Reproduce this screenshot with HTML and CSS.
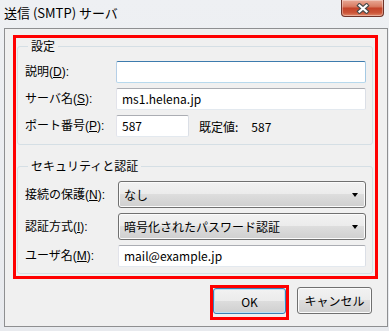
FILE: index.html
```html
<!DOCTYPE html>
<html lang="ja">
<head>
  <meta charset="UTF-8" />
  <title>送信 (SMTP) サーバ</title>
  <link rel="stylesheet" href="styles.css">
</head>
<body>
  <div class="window">
    <div class="titlebar">
      <span class="title">送信 (SMTP) サーバ</span>
      <span class="close">
        <svg width="14" height="11" viewBox="0 0 14 11">
          <path d="M3.5 2.5 L10.5 8.5 M10.5 2.5 L3.5 8.5" stroke="#4b4b4b" stroke-width="4.4" stroke-linecap="square" fill="none"/>
          <path d="M3.5 2.5 L10.5 8.5 M10.5 2.5 L3.5 8.5" stroke="#fff" stroke-width="2.2" stroke-linecap="square" fill="none"/>
        </svg>
      </span>
    </div>

    <div class="client">
      <div class="mark">
        <fieldset class="group g1">
          <legend>設定</legend>
          <div class="rows">
            <div class="row">
              <span class="label">説明(<u>D</u>):</span>
              <div class="field focus"></div>
            </div>
            <div class="row">
              <span class="label">サーバ名(<u>S</u>):</span>
              <div class="field">ms1.helena.jp</div>
            </div>
            <div class="row">
              <span class="label">ポート番号(<u>P</u>):</span>
              <div class="inline">
                <div class="field port">587</div>
                <span class="default-label">既定値:</span>
                <span class="default-value">587</span>
              </div>
            </div>
          </div>
        </fieldset>

        <fieldset class="group g2">
          <legend>セキュリティと認証</legend>
          <div class="rows">
            <div class="row tall">
              <span class="label">接続の保護(<u>N</u>):</span>
              <div class="combo"><span>なし</span><span class="arrow"></span></div>
            </div>
            <div class="row tall">
              <span class="label">認証方式(<u>I</u>):</span>
              <div class="combo"><span>暗号化されたパスワード認証</span><span class="arrow"></span></div>
            </div>
            <div class="row">
              <span class="label">ユーザ名(<u>M</u>):</span>
              <div class="field">mail@example.jp</div>
            </div>
          </div>
        </fieldset>
      </div>

      <div class="buttons">
        <span class="ok-mark"><button class="btn default">OK</button></span>
        <button class="btn cancel">キャンセル</button>
      </div>
    </div>
  </div>
</body>
</html>
```

FILE: styles.css
```css
body {
  margin: 0;
  font-family: "Noto Sans CJK JP", sans-serif;
  font-size: 12px;
  color: #000;
}
.window {
  width: 389px;
  height: 331px;
  box-sizing: border-box;
  padding: 0 1px 4px 4px;
  background: linear-gradient(to bottom, #eef0f3, #e8eaee);
  display: flex;
  flex-direction: column;
}
.titlebar {
  height: 28px;
  flex: none;
  display: flex;
  align-items: flex-start;
}
.title {
  font-size: 13px;
  line-height: 18px;
  margin-top: 4px;
}
.close {
  margin-left: auto;
  margin-right: 4px;
  width: 43px;
  height: 17px;
  box-sizing: border-box;
  border: 1px solid #70342a;
  border-top: none;
  border-radius: 0 0 4px 4px;
  background: linear-gradient(to bottom, #e9a996 0%, #d97c63 40%, #c4442a 52%, #cc5538 80%, #e08a6c 100%);
  box-shadow: inset 0 0 0 1px rgba(255,255,255,0.35);
  display: flex;
  align-items: center;
  justify-content: center;
}
.client {
  flex: 1;
  border: 1px solid #8e8f91;
  background: #f0f0f0;
  padding: 6px 9px 0 8px;
}
.mark {
  border: 3px solid #ff0000;
  padding: 0 2px 2px 1px;
}
.group {
  margin: 0;
  border: 1px solid #d5dfe5;
  border-radius: 3px;
  padding: 7px 6px 7px 7px;
  min-width: 0;
}
.group legend {
  margin-left: 3px;
  padding: 0 3px;
  line-height: 16px;
}
.g2 {
  margin-top: 13px;
  padding-bottom: 6px;
}
.rows {
  display: flex;
  flex-direction: column;
  gap: 5px;
}
.row {
  display: grid;
  grid-template-columns: 91px 1fr;
  align-items: center;
  height: 22px;
}
.g2 .row { grid-template-columns: 93px 1fr; }
.row.tall { height: 27px; }
.label {
  font-family: "Liberation Sans", "Noto Sans CJK JP", sans-serif;
  line-height: 16px;
}
.label u { text-underline-offset: 1px; }
.field {
  height: 22px;
  box-sizing: border-box;
  border: 1px solid;
  border-color: #abadb3 #dbdfe6 #e3e9ef #e2e3ea;
  border-radius: 2px;
  background: #fff;
  padding: 0 5px;
  line-height: 20px;
}
.field.focus { border-color: #3d7bad #a4c9e3 #b7d9ed #b5cfe7; }
.inline {
  display: flex;
  align-items: center;
}
.field.port { width: 73px; }
.default-label { margin-left: 10px; }
.default-value { margin-left: 13px; }
.combo {
  height: 27px;
  box-sizing: border-box;
  border: 1px solid #707070;
  border-radius: 3px;
  background: linear-gradient(to bottom, #f2f2f2 0%, #ebebeb 50%, #dddddd 50%, #cfcfcf 100%);
  box-shadow: inset 0 0 0 1px #fbfbfb;
  display: flex;
  align-items: center;
  justify-content: space-between;
  padding: 0 7px 0 5px;
}
.arrow {
  width: 0;
  height: 0;
  border-left: 3.5px solid transparent;
  border-right: 3.5px solid transparent;
  border-top: 4px solid #000;
  margin-top: 1px;
}
.buttons {
  display: flex;
  justify-content: flex-end;
  align-items: flex-start;
  gap: 8px;
  margin: 6px 6px 0 0;
}
.ok-mark {
  display: flex;
  border: 3px solid #ff0000;
  padding-bottom: 3px;
}
.btn {
  font-family: inherit;
  font-size: 12px;
  color: #000;
  width: 73px;
  height: 26px;
  padding: 0;
  border: 1px solid #707070;
  border-radius: 3px;
  background: linear-gradient(to bottom, #f2f2f2 0%, #ebebeb 50%, #dddddd 50%, #cfcfcf 100%);
  box-shadow: inset 0 0 0 1px #fbfbfb;
}
.btn.default {
  border-color: #3c7fb1;
  box-shadow: inset 0 0 0 1px #b9e2f7;
}
.btn.cancel {
  width: 75px;
  height: 27px;
  margin-top: 2px;
}
```
